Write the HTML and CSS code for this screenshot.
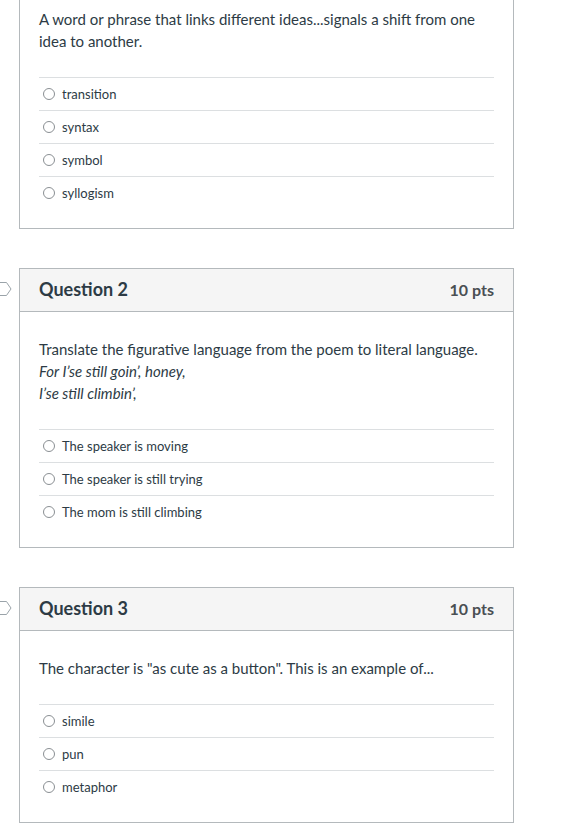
FILE: index.html
```html
<!DOCTYPE html>
<html>
<head>
<meta charset="utf-8">
<link rel="stylesheet" href="styles.css">
</head>
<body>
<div class="page">
  <div class="question question--cut">
    <div class="body">
      <div class="qtext">A word or phrase that links different ideas...signals a shift from one idea to another.</div>
      <div class="answers">
        <label class="answer"><span class="radio"></span><span>transition</span></label>
        <label class="answer"><span class="radio"></span><span>syntax</span></label>
        <label class="answer"><span class="radio"></span><span>symbol</span></label>
        <label class="answer"><span class="radio"></span><span>syllogism</span></label>
      </div>
    </div>
  </div>

  <div class="question">
    <svg class="flag" width="12" height="16" viewBox="0 0 12 16"><polygon points="-6,1.5 6.5,1.5 11,8 6.5,14.5 -6,14.5" fill="none" stroke="#9aa3a9" stroke-width="1"/></svg>
    <div class="header">
      <span class="title">Question 2</span>
      <span class="pts">10 pts</span>
    </div>
    <div class="body">
      <div class="qtext">Translate the figurative language from the poem to literal language.<br><em>For I’se still goin’, honey,</em><br><em>I’se still climbin’,</em></div>
      <div class="answers">
        <label class="answer"><span class="radio"></span><span>The speaker is moving</span></label>
        <label class="answer"><span class="radio"></span><span>The speaker is still trying</span></label>
        <label class="answer"><span class="radio"></span><span>The mom is still climbing</span></label>
      </div>
    </div>
  </div>

  <div class="question">
    <svg class="flag" width="12" height="16" viewBox="0 0 12 16"><polygon points="-6,1.5 6.5,1.5 11,8 6.5,14.5 -6,14.5" fill="none" stroke="#9aa3a9" stroke-width="1"/></svg>
    <div class="header">
      <span class="title">Question 3</span>
      <span class="pts">10 pts</span>
    </div>
    <div class="body">
      <div class="qtext">The character is "as cute as a button". This is an example of...</div>
      <div class="answers">
        <label class="answer"><span class="radio"></span><span>simile</span></label>
        <label class="answer"><span class="radio"></span><span>pun</span></label>
        <label class="answer"><span class="radio"></span><span>metaphor</span></label>
      </div>
    </div>
  </div>
</div>
</body>
</html>
```

FILE: styles.css
```css
* { box-sizing: border-box; }
html, body { margin: 0; padding: 0; background: #fff; }
body {
  font-family: Lato, "Open Sans", Arial, sans-serif;
  color: #2d3b45;
  width: 581px;
  height: 833px;
  overflow: hidden;
}
.page {
  padding-left: 19px;
  display: flex;
  flex-direction: column;
  gap: 39px;
}
.question {
  position: relative;
  width: 495px;
  border: 1px solid #b4b9bc;
  background: #fff;
}
.question--cut {
  margin-top: -19px;
}
.flag {
  position: absolute;
  left: -20px;
  top: 12px;
}
.header {
  height: 43px;
  background: #f5f5f5;
  border-bottom: 1px solid #b4b9bc;
  display: flex;
  align-items: center;
  justify-content: space-between;
  padding: 0 19px 2px 19px;
}
.title {
  font-size: 18px;
  font-weight: 700;
  color: #2d3b45;
}
.pts {
  font-size: 16px;
  font-weight: 700;
  color: #4a4f53;
}
.body {
  padding: 26px 19px 19px 19px;
}
.qtext {
  font-size: 15px;
  line-height: 22px;
  color: #2d3b45;
}
.qtext em { font-style: italic; }
.answers {
  margin-top: 25px;
}
.answer {
  display: flex;
  align-items: center;
  height: 33px;
  border-top: 1px solid #dcdfe1;
  padding-left: 4px;
  font-size: 13px;
  color: #2d3b45;
}
.radio {
  width: 12px;
  height: 12px;
  border: 1px solid #8a8f93;
  border-radius: 50%;
  margin-right: 7px;
  flex: none;
}
```
